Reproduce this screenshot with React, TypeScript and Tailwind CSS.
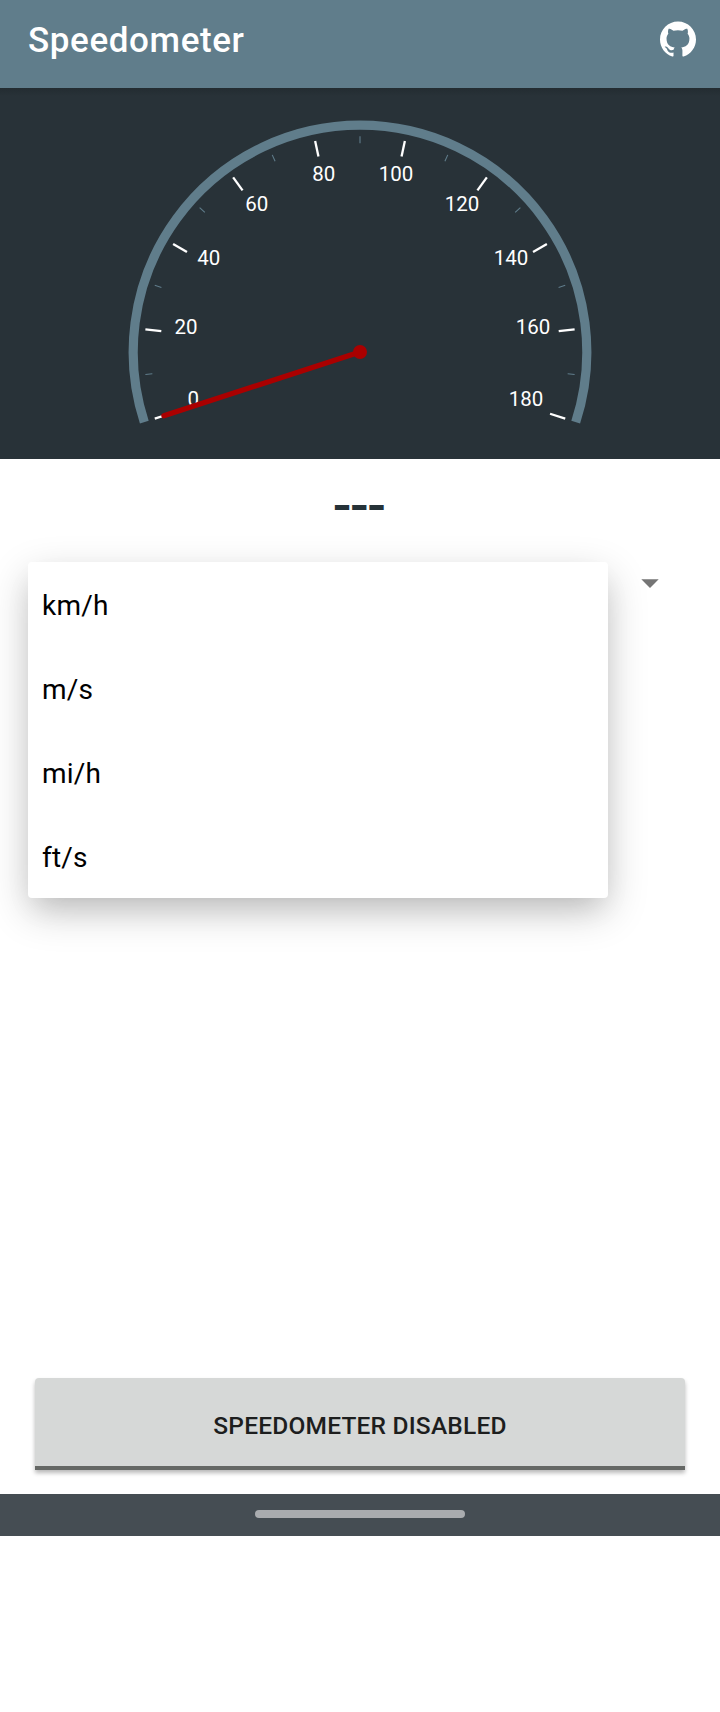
import { SiGithub } from "react-icons/si";

const CX = 360;
const CY = 264;

function polar(value: number, radius: number) {
  const angle = ((162 + value * 1.2) * Math.PI) / 180;
  return { x: CX + radius * Math.cos(angle), y: CY + radius * Math.sin(angle) };
}

const labels = [
  { text: "0", x: 193.3, y: 318 },
  { text: "20", x: 186, y: 246 },
  { text: "40", x: 208.7, y: 177 },
  { text: "60", x: 256.8, y: 123 },
  { text: "80", x: 323.8, y: 93 },
  { text: "100", x: 396, y: 93 },
  { text: "120", x: 462, y: 123 },
  { text: "140", x: 511, y: 177 },
  { text: "160", x: 533, y: 246 },
  { text: "180", x: 526, y: 318 },
];

const units = ["km/h", "m/s", "mi/h", "ft/s"];

function Tick({ value, major }: { value: number; major: boolean }) {
  const a = polar(value, 215.8);
  const b = polar(value, major ? 199.8 : 208.8);
  return (
    <line
      x1={a.x}
      y1={a.y}
      x2={b.x}
      y2={b.y}
      stroke={major ? "#ffffff" : "#607d8b"}
      strokeWidth={major ? 2.3 : 1.1}
    />
  );
}

function Gauge() {
  const start = polar(0, 226.8);
  const end = polar(180, 226.8);
  const tip = polar(0, 206.2);
  return (
    <svg className="block h-full w-full font-['Roboto',sans-serif]" viewBox="0 0 720 371">
      <path
        d={`M${start.x} ${start.y}A226.8 226.8 0 1 1 ${end.x} ${end.y}`}
        fill="none"
        stroke="#607d8b"
        strokeWidth={9.2}
      />
      {Array.from({ length: 19 }, (_, i) => i * 10).map((v) => (
        <Tick key={v} value={v} major={v % 20 === 0} />
      ))}
      {labels.map((l) => (
        <text key={l.text} x={l.x} y={l.y} fontSize={20.5} fill="#ffffff" textAnchor="middle">
          {l.text}
        </text>
      ))}
      <line x1={CX} y1={CY} x2={tip.x} y2={tip.y} stroke="#aa0000" strokeWidth={5.3} strokeLinecap="round" />
      <circle cx={CX} cy={CY} r={7} fill="#aa0000" />
    </svg>
  );
}

export default function App() {
  return (
    <div className="flex h-[1712px] w-[720px] flex-col bg-white font-['Roboto',sans-serif]">
      <header className="flex h-[88px] items-start justify-between bg-[#607d8b] pr-6 pl-7 text-white">
        <h1 className="pt-5 text-[35px] leading-[41px] font-medium tracking-[0.6px]">Speedometer</h1>
        <SiGithub className="mt-[20.5px] size-9" />
      </header>

      <section className="h-[371px] bg-[#283238] bg-linear-to-b from-[#232c31] to-[#283238] to-[8px]">
        <Gauge />
      </section>

      <main className="relative flex h-[1035px] flex-col">
        <p className="flex justify-center pt-[21px] pr-[3.6px] text-[43.75px] leading-[52px] font-bold text-[#263238]">
          <span className="scale-x-[1.18] tracking-[-2.6px]">---</span>
        </p>

        <div className="mt-[47px] flex justify-end pr-[61px]">
          <svg className="h-[9px] w-[18px]" viewBox="0 0 18 9">
            <path d="M0.3 0.3H17.7L9 9Z" fill="#757575" />
          </svg>
        </div>

        <ul className="absolute top-[103px] left-7 w-[580px] rounded-[4px] bg-white text-[28px] tracking-[0.2px] text-black shadow-[0_14px_42px_rgba(0,0,0,0.2),0_14px_28px_-8px_rgba(0,0,0,0.12)]">
          {units.map((unit) => (
            <li key={unit} className="flex h-[84px] items-center px-[14px] pt-1">
              {unit}
            </li>
          ))}
        </ul>

        <button className="mx-[35px] mt-auto mb-6 flex h-[92px] items-center justify-center rounded-t-[4px] border-b-4 border-[#656865] bg-[#d6d8d7] pt-[8px] text-[24.5px] font-medium tracking-[0.2px] text-[#1d1e1e] shadow-[0_3px_4px_rgba(0,0,0,0.28)]">
          SPEEDOMETER DISABLED
        </button>
      </main>

      <footer className="flex h-[42px] items-start justify-center bg-[#454d53] pt-4">
        <div className="h-2 w-[210px] rounded-full bg-[#a9acaf]" />
      </footer>
    </div>
  );
}
